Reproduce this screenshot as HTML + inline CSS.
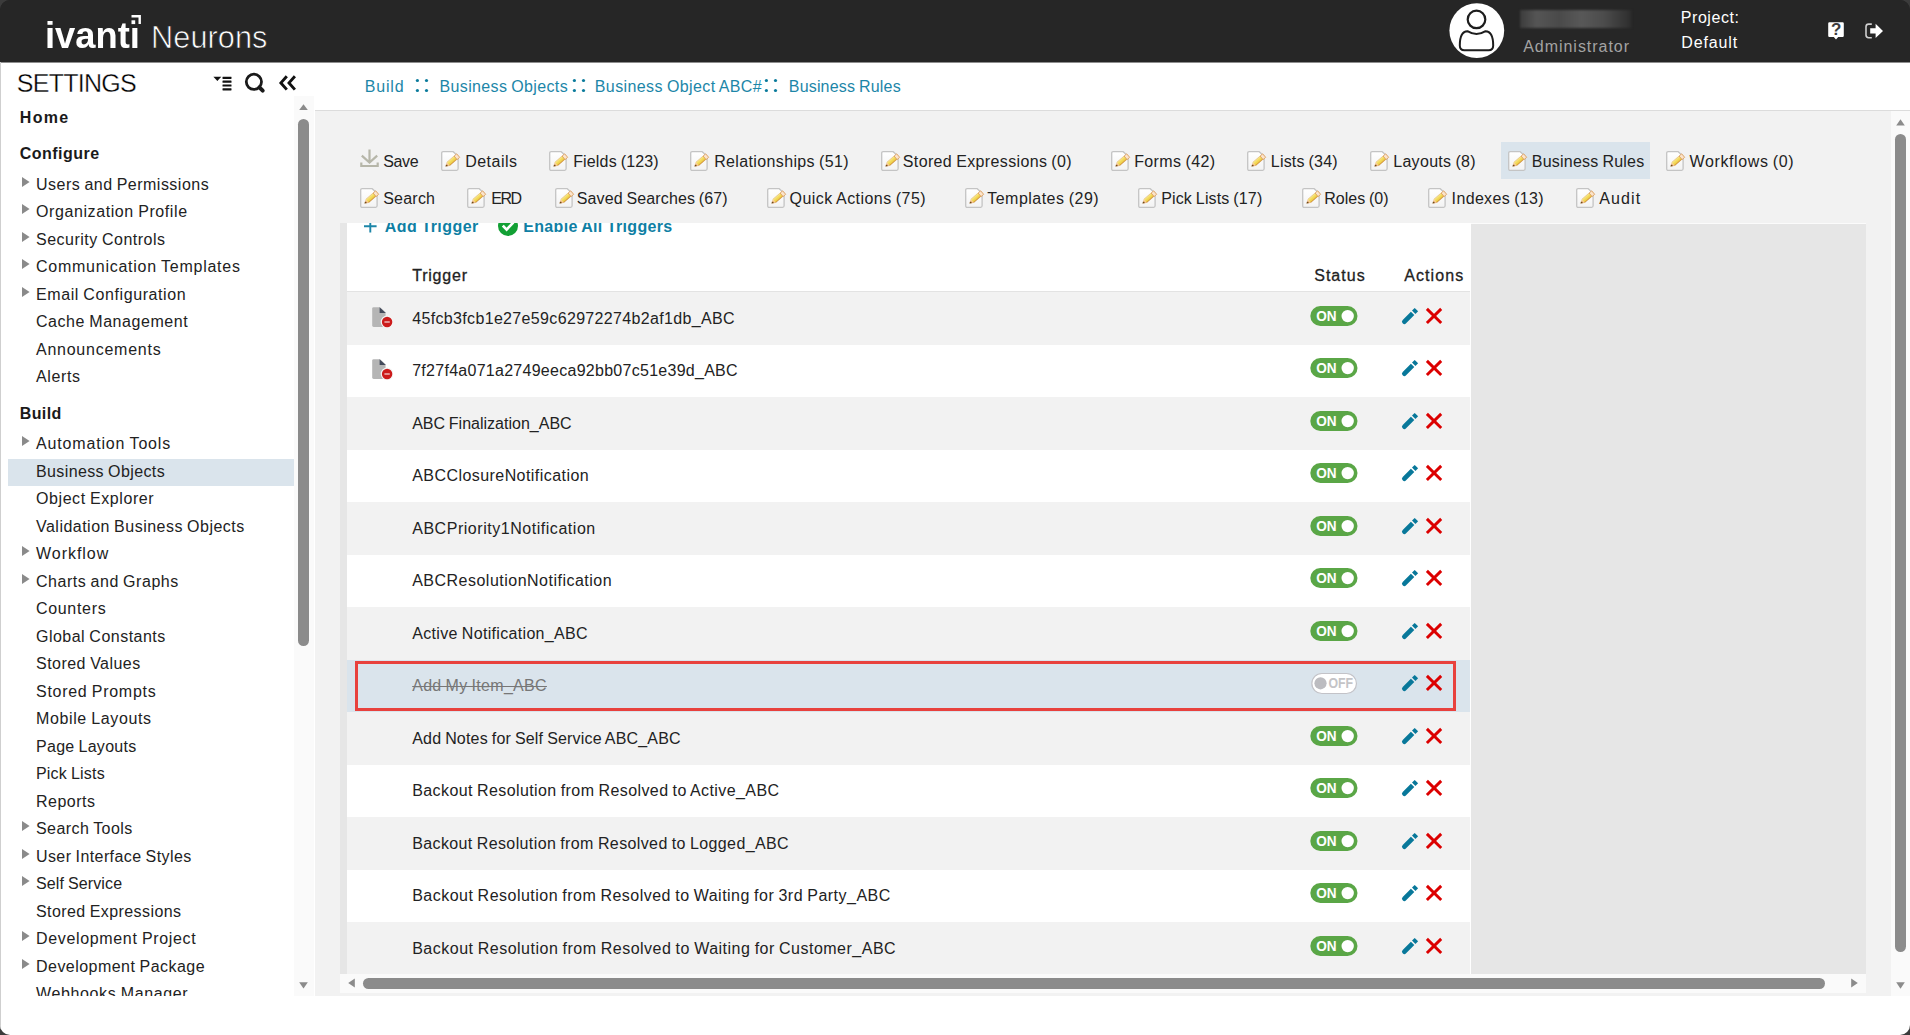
<!DOCTYPE html>
<html><head><meta charset="utf-8"><title>Ivanti Neurons - Business Rules</title>
<style>
*{box-sizing:border-box}
html,body{margin:0;padding:0}
body{width:1910px;height:1035px;overflow:hidden;background:#3b3b3b;font-family:"Liberation Sans",sans-serif;}
#app{position:absolute;left:0;top:0;width:1910px;height:1035px;background:linear-gradient(#262626 0,#262626 62px,#fff 62px);border-radius:10px;overflow:hidden}
.a{position:absolute;display:block}
.t{position:absolute;white-space:pre;display:block}
#hdr{left:0;top:0;width:1910px;height:62px;background:#262626;border-bottom:0}
#hline{left:0;top:62px;width:1910px;height:1px;background:#8e8e8e}
#ledge{left:0;top:62px;width:1px;height:973px;background:#cfcfcf}
#side{left:0;top:62px;width:294px;height:933.6px;overflow:hidden}
#strack{left:294px;top:96px;width:19.5px;height:899.6px;background:#fafafa}
#main{left:315px;top:110.4px;width:1576.3px;height:885.2px;background:#f2f2f2}
#bline{left:315px;top:110px;width:1595px;height:1px;background:#dcdcdc}
#vtrack{left:1891.3px;top:111px;width:18.7px;height:884.6px;background:#fafafa}
#act{left:1501px;top:142px;width:148.6px;height:36.6px;background:#dae4ec}
#panel{left:340px;top:223px;width:1526px;height:751px;background:#e6e6e6;overflow:hidden}
#pwhite{left:6.5px;top:0;width:1124.5px;height:751px;background:#fff}
#pline{left:1471px;top:223px;width:395px;height:1px;background:#fbfbfb}
#htrack{left:340px;top:974px;width:1526px;height:19px;background:#fafafa}
.th{background:#8b8b8b;border-radius:6px}
</style></head>
<body>

<svg width="0" height="0" style="position:absolute"><defs>
<linearGradient id="pgr" gradientUnits="userSpaceOnUse" x1="5.68" y1="11.44" x2="8.68" y2="14.92"><stop offset="0" stop-color="#f6e7a6"/><stop offset="0.3" stop-color="#f5e064"/><stop offset="0.7" stop-color="#efcf4c"/><stop offset="1" stop-color="#c98434"/></linearGradient>
<linearGradient id="pgp" x1="0" y1="0" x2="0" y2="1"><stop offset="0" stop-color="#fff"/><stop offset="1" stop-color="#f3f3f3"/></linearGradient>
<g id="pg">
 <path d="M2.2 0.7H12.2L17.1 5.2V17.8Q17.1 19.3 15.6 19.3H2.2Q0.7 19.3 0.7 17.8V2.2Q0.7 0.7 2.2 0.7Z" fill="url(#pgp)" stroke="#c4c4c4" stroke-width="1.3"/>
 <path d="M5.68 11.44L13.1 5.04L16.1 8.52L8.68 14.92Z" fill="url(#pgr)"/>
 <path d="M13.1 5.04L15.68 2.83L18.68 6.31L16.1 8.52Z" fill="#fbe4cb" stroke="#d9964f" stroke-width="0.8" stroke-linejoin="round"/>
 <path d="M4.6 15.4L5.68 11.44L8.68 14.92Z" fill="#f3bd88"/>
 <path d="M4.5 15.5L5 13.6L7.2 15.1Z" fill="#6b4716"/>
 <path d="M5.68 11.44L13.1 5.04" stroke="#e3b45c" stroke-width="0.6"/>
</g>
<g id="sep" fill="#0b7b9c"><circle cx="2.4" cy="2.5" r="1.6"/><circle cx="11.5" cy="2.5" r="1.6"/><circle cx="2.4" cy="12.5" r="1.6"/><circle cx="11.5" cy="12.5" r="1.6"/></g>
<g id="doc">
 <path d="M1.6 0.2H8L13.6 5.6V20H1.6Q0.2 20 0.2 18.6V1.6Q0.2 0.2 1.6 0.2Z" fill="#b5b5b5"/>
 <path d="M7.6 0.2L13.8 6H7.6Z" fill="#434a5a"/>
 <circle cx="15.1" cy="15" r="6.4" fill="#f4f4f4"/>
 <circle cx="15.1" cy="15" r="5.2" fill="#cc1b1b"/>
 <rect x="12.4" y="14.1" width="5.4" height="1.9" rx="0.5" fill="#e48f8f"/>
</g>
<g id="on">
 <rect x="0.3" y="0" width="47.2" height="20" rx="10" fill="#5aa646"/>
 <circle cx="37.7" cy="10.1" r="6.2" fill="#fff"/>
 <text x="6.2" y="15.2" font-family="Liberation Sans, sans-serif" font-weight="700" font-size="14.3" fill="#fff" textLength="20.4" lengthAdjust="spacingAndGlyphs">ON</text>
</g>
<g id="off">
 <rect x="1.85" y="-0.5" width="44.6" height="20" rx="10" fill="#fff" stroke="#c3c3c8" stroke-width="1.2"/>
 <circle cx="10.5" cy="9.3" r="6.1" fill="#bcbcc0"/>
 <text x="18.4" y="14.4" font-family="Liberation Sans, sans-serif" font-weight="700" font-size="13.8" fill="#c4c4c7" textLength="24.6" lengthAdjust="spacingAndGlyphs">OFF</text>
</g>
<g id="act">
 <path d="M1.7 11.9L9.9 3.7L13.3 7.1L5.1 15.3A2.4 2.4 0 0 1 1.7 11.9Z" fill="#08789a"/>
 <path d="M11 2.6L13.7 -0.1L17.1 3.3L14.4 6Z" fill="#08789a"/>
 <path d="M25.9 0.9L40.2 15M40.2 0.9L25.9 15" stroke="#dc0000" stroke-width="2.9" fill="none"/>
</g>
</defs></svg>

<div id="app">
<div class="a" id="hline"></div>
<div class="a" id="hdr"></div>

<svg class="a" style="left:131px;top:15px" width="11" height="11" viewBox="0 0 11 11"><path d="M0.5 0H9.9V9.1H7.5V2.4H0.5Z" fill="#fff"/><rect x="0.5" y="5.3" width="3.7" height="3.8" fill="#fff"/></svg>
<svg class="a" style="left:1449px;top:2.6px" width="56" height="56" viewBox="0 0 56 56"><circle cx="27.8" cy="27.6" r="27.4" fill="#fff"/><circle cx="27.5" cy="16.4" r="8.8" fill="none" stroke="#1d1d1d" stroke-width="2.2"/><path d="M18.4 28.2Q27.5 33.8 36.6 28.2Q44.2 28.6 44.2 42.4Q44.2 47.2 39.6 47.2H15.4Q10.8 47.2 10.8 42.4Q10.8 28.6 18.4 28.2Z" fill="none" stroke="#1d1d1d" stroke-width="2" stroke-linejoin="round"/></svg>
<div class="a" style="left:1520px;top:10px;width:112px;height:18px;background:linear-gradient(90deg,#3c3c3c,#555 15%,#4a4a4a 35%,#585858 55%,#4c4c4c 75%,#333 95%,#2a2a2a);filter:blur(1.2px)"></div>
<svg class="a" style="left:1828px;top:22px" width="17" height="18" viewBox="0 0 17 18"><path d="M1.4 0.3H14.6Q15.8 0.3 15.8 1.5V13.8Q15.8 15 14.6 15H10.2L8 17.4L5.8 15H1.4Q0.2 15 0.2 13.8V1.5Q0.2 0.3 1.4 0.3Z" fill="#fff"/><text x="8.1" y="13.4" text-anchor="middle" font-family="Liberation Sans, sans-serif" font-weight="700" font-size="17" fill="#3c3c3c">?</text></svg>
<svg class="a" style="left:1864.5px;top:23px" width="19" height="16" viewBox="0 0 19 16"><path d="M6.8 1.1H3.6Q1 1.1 1 3.7V12.1Q1 14.7 3.6 14.7H6.8" fill="none" stroke="#cfcfcf" stroke-width="1.6"/><path d="M5.2 5.2H10.6V0.8L18 7.9L10.6 15V10.6H5.2Z" fill="#fff"/></svg>

<div class="a" id="ledge"></div>
<div class="a" id="main"></div>
<div class="a" id="bline"></div>
<div class="a" id="act"></div>

<svg class="a" style="left:213px;top:76px" width="20" height="16" viewBox="0 0 20 16"><path d="M0.4 0.7H8.3L4.35 4.9Z" fill="#111"/><g fill="#111"><rect x="9.5" y="0.7" width="9" height="2.2" rx="0.4"/><rect x="9.5" y="4.6" width="9" height="2.2" rx="0.4"/><rect x="9.5" y="8.4" width="9" height="2.2" rx="0.4"/><rect x="9.5" y="12.3" width="9" height="2.2" rx="0.4"/></g></svg>
<svg class="a" style="left:244px;top:72px" width="23" height="23" viewBox="0 0 23 23"><circle cx="9.9" cy="9.8" r="7.6" fill="none" stroke="#1a1a1a" stroke-width="2.8"/><path d="M15.4 15.4L18.7 18.7" stroke="#1a1a1a" stroke-width="4" stroke-linecap="round"/></svg>
<svg class="a" style="left:278px;top:74px" width="20" height="18" viewBox="0 0 20 18"><path d="M8.8 2.2L2.9 8.9L8.8 15.6M16.9 2.2L11 8.9L16.9 15.6" fill="none" stroke="#111" stroke-width="2.9" stroke-linecap="butt" stroke-linejoin="miter"/></svg>

<svg class="a" style="left:360px;top:149px" width="19" height="19" viewBox="0 0 19 19"><path d="M9.5 0.6V13M1.8 6.6L9.5 13.6L17.2 6.6" fill="none" stroke="#b6b6a9" stroke-width="2.2"/><path d="M1.3 13.4V17H17.7V13.4" fill="none" stroke="#b6b6a9" stroke-width="2.2"/></svg>
<div class="a" id="side">
<div class="a" style="left:8px;top:397px;width:286px;height:27px;background:#dae4ec"></div>
<span class="t" style="left:36.0px;top:112.0px;font-size:16px;line-height:21px;letter-spacing:0.479px;color:#222;word-spacing:-0.72px;">Users and Permissions</span>
<span class="t" style="left:36.0px;top:139.0px;font-size:16px;line-height:21px;letter-spacing:0.592px;color:#222;word-spacing:-0.72px;">Organization Profile</span>
<span class="t" style="left:36.0px;top:167.0px;font-size:16px;line-height:21px;letter-spacing:0.496px;color:#222;word-spacing:-0.72px;">Security Controls</span>
<span class="t" style="left:36.0px;top:194.0px;font-size:16px;line-height:21px;letter-spacing:0.747px;color:#222;word-spacing:-0.72px;">Communication Templates</span>
<span class="t" style="left:36.0px;top:222.0px;font-size:16px;line-height:21px;letter-spacing:0.596px;color:#222;word-spacing:-0.72px;">Email Configuration</span>
<span class="t" style="left:36.0px;top:249.0px;font-size:16px;line-height:21px;letter-spacing:0.551px;color:#222;word-spacing:-0.72px;">Cache Management</span>
<span class="t" style="left:36.0px;top:277.0px;font-size:16px;line-height:21px;letter-spacing:0.750px;color:#222;">Announcements</span>
<span class="t" style="left:36.0px;top:304.0px;font-size:16px;line-height:21px;letter-spacing:0.627px;color:#222;">Alerts</span>
<span class="t" style="left:36.0px;top:371.0px;font-size:16px;line-height:21px;letter-spacing:0.834px;color:#222;word-spacing:-0.72px;">Automation Tools</span>
<span class="t" style="left:36.0px;top:399.0px;font-size:16px;line-height:21px;letter-spacing:0.383px;color:#222;word-spacing:-0.72px;">Business Objects</span>
<span class="t" style="left:36.0px;top:426.0px;font-size:16px;line-height:21px;letter-spacing:0.578px;color:#222;word-spacing:-0.72px;">Object Explorer</span>
<span class="t" style="left:36.0px;top:454.0px;font-size:16px;line-height:21px;letter-spacing:0.482px;color:#222;word-spacing:-0.72px;">Validation Business Objects</span>
<span class="t" style="left:36.0px;top:481.0px;font-size:16px;line-height:21px;letter-spacing:0.963px;color:#222;">Workflow</span>
<span class="t" style="left:36.0px;top:509.0px;font-size:16px;line-height:21px;letter-spacing:0.531px;color:#222;word-spacing:-0.72px;">Charts and Graphs</span>
<span class="t" style="left:36.0px;top:536.0px;font-size:16px;line-height:21px;letter-spacing:0.674px;color:#222;">Counters</span>
<span class="t" style="left:36.0px;top:564.0px;font-size:16px;line-height:21px;letter-spacing:0.482px;color:#222;word-spacing:-0.72px;">Global Constants</span>
<span class="t" style="left:36.0px;top:591.0px;font-size:16px;line-height:21px;letter-spacing:0.469px;color:#222;word-spacing:-0.72px;">Stored Values</span>
<span class="t" style="left:36.0px;top:619.0px;font-size:16px;line-height:21px;letter-spacing:0.708px;color:#222;word-spacing:-0.72px;">Stored Prompts</span>
<span class="t" style="left:36.0px;top:646.0px;font-size:16px;line-height:21px;letter-spacing:0.626px;color:#222;word-spacing:-0.72px;">Mobile Layouts</span>
<span class="t" style="left:36.0px;top:674.0px;font-size:16px;line-height:21px;letter-spacing:0.282px;color:#222;word-spacing:-0.72px;">Page Layouts</span>
<span class="t" style="left:36.0px;top:701.0px;font-size:16px;line-height:21px;letter-spacing:0.198px;color:#222;word-spacing:-0.72px;">Pick Lists</span>
<span class="t" style="left:36.0px;top:729.0px;font-size:16px;line-height:21px;letter-spacing:0.501px;color:#222;">Reports</span>
<span class="t" style="left:36.0px;top:756.0px;font-size:16px;line-height:21px;letter-spacing:0.432px;color:#222;word-spacing:-0.72px;">Search Tools</span>
<span class="t" style="left:36.0px;top:784.0px;font-size:16px;line-height:21px;letter-spacing:0.409px;color:#222;word-spacing:-0.72px;">User Interface Styles</span>
<span class="t" style="left:36.0px;top:811.0px;font-size:16px;line-height:21px;letter-spacing:0.126px;color:#222;word-spacing:-0.72px;">Self Service</span>
<span class="t" style="left:36.0px;top:839.0px;font-size:16px;line-height:21px;letter-spacing:0.413px;color:#222;word-spacing:-0.72px;">Stored Expressions</span>
<span class="t" style="left:36.0px;top:866.0px;font-size:16px;line-height:21px;letter-spacing:0.658px;color:#222;word-spacing:-0.72px;">Development Project</span>
<span class="t" style="left:36.0px;top:894.0px;font-size:16px;line-height:21px;letter-spacing:0.465px;color:#222;word-spacing:-0.72px;">Development Package</span>
<span class="t" style="left:36.0px;top:921.0px;font-size:16px;line-height:21px;letter-spacing:0.630px;color:#222;word-spacing:-0.72px;">Webhooks Manager</span>
<svg class="a" style="left:22.4px;top:115.0px" width="8" height="10" viewBox="0 0 8 10"><path d="M0 0L7.6 5L0 10Z" fill="#8a8a8a"/></svg>
<svg class="a" style="left:22.4px;top:142.0px" width="8" height="10" viewBox="0 0 8 10"><path d="M0 0L7.6 5L0 10Z" fill="#8a8a8a"/></svg>
<svg class="a" style="left:22.4px;top:170.0px" width="8" height="10" viewBox="0 0 8 10"><path d="M0 0L7.6 5L0 10Z" fill="#8a8a8a"/></svg>
<svg class="a" style="left:22.4px;top:197.0px" width="8" height="10" viewBox="0 0 8 10"><path d="M0 0L7.6 5L0 10Z" fill="#8a8a8a"/></svg>
<svg class="a" style="left:22.4px;top:225.0px" width="8" height="10" viewBox="0 0 8 10"><path d="M0 0L7.6 5L0 10Z" fill="#8a8a8a"/></svg>
<svg class="a" style="left:22.4px;top:374.0px" width="8" height="10" viewBox="0 0 8 10"><path d="M0 0L7.6 5L0 10Z" fill="#8a8a8a"/></svg>
<svg class="a" style="left:22.4px;top:484.0px" width="8" height="10" viewBox="0 0 8 10"><path d="M0 0L7.6 5L0 10Z" fill="#8a8a8a"/></svg>
<svg class="a" style="left:22.4px;top:512.0px" width="8" height="10" viewBox="0 0 8 10"><path d="M0 0L7.6 5L0 10Z" fill="#8a8a8a"/></svg>
<svg class="a" style="left:22.4px;top:759.0px" width="8" height="10" viewBox="0 0 8 10"><path d="M0 0L7.6 5L0 10Z" fill="#8a8a8a"/></svg>
<svg class="a" style="left:22.4px;top:787.0px" width="8" height="10" viewBox="0 0 8 10"><path d="M0 0L7.6 5L0 10Z" fill="#8a8a8a"/></svg>
<svg class="a" style="left:22.4px;top:814.0px" width="8" height="10" viewBox="0 0 8 10"><path d="M0 0L7.6 5L0 10Z" fill="#8a8a8a"/></svg>
<svg class="a" style="left:22.4px;top:869.0px" width="8" height="10" viewBox="0 0 8 10"><path d="M0 0L7.6 5L0 10Z" fill="#8a8a8a"/></svg>
<svg class="a" style="left:22.4px;top:897.0px" width="8" height="10" viewBox="0 0 8 10"><path d="M0 0L7.6 5L0 10Z" fill="#8a8a8a"/></svg>
</div>
<div class="a" id="panel">
<div class="a" id="pwhite"></div>
<div class="a" style="left:7px;top:69px;width:1123px;height:53px;background:#f2f2f2"></div>
<div class="a" style="left:7px;top:122px;width:1123px;height:52px;background:#fff"></div>
<div class="a" style="left:7px;top:174px;width:1123px;height:53px;background:#f2f2f2"></div>
<div class="a" style="left:7px;top:227px;width:1123px;height:52px;background:#fff"></div>
<div class="a" style="left:7px;top:279px;width:1123px;height:53px;background:#f2f2f2"></div>
<div class="a" style="left:7px;top:332px;width:1123px;height:52px;background:#fff"></div>
<div class="a" style="left:7px;top:384px;width:1123px;height:53px;background:#f2f2f2"></div>
<div class="a" style="left:7px;top:437px;width:1123px;height:52px;background:#dae4ec"></div>
<div class="a" style="left:7px;top:489px;width:1123px;height:53px;background:#f2f2f2"></div>
<div class="a" style="left:7px;top:542px;width:1123px;height:52px;background:#fff"></div>
<div class="a" style="left:7px;top:594px;width:1123px;height:53px;background:#f2f2f2"></div>
<div class="a" style="left:7px;top:647px;width:1123px;height:52px;background:#fff"></div>
<div class="a" style="left:7px;top:699px;width:1123px;height:53px;background:#f2f2f2"></div>
<div class="a" style="left:7px;top:752px;width:1123px;height:52px;background:#fff"></div>
<div class="a" style="left:7px;top:68px;width:1123px;height:1px;background:#e3e3e3"></div>
<span class="t" style="left:44.8px;top:-7.0px;font-size:16px;line-height:21px;letter-spacing:0.438px;color:#0f7fa4;word-spacing:-0.72px;font-weight:700;">Add Trigger</span>
<span class="t" style="left:183.2px;top:-7.0px;font-size:16px;line-height:21px;letter-spacing:0.341px;color:#0f7fa4;word-spacing:-0.72px;font-weight:700;">Enable All Triggers</span>
<span class="t" style="left:72.2px;top:42.0px;font-size:16px;line-height:21px;letter-spacing:0.791px;color:#222;-webkit-text-stroke:0.3px #222;">Trigger</span>
<span class="t" style="left:974.2px;top:42.0px;font-size:16px;line-height:21px;letter-spacing:1.016px;color:#222;-webkit-text-stroke:0.3px #222;">Status</span>
<span class="t" style="left:1064.2px;top:42.0px;font-size:16px;line-height:21px;letter-spacing:1.079px;color:#222;-webkit-text-stroke:0.3px #222;">Actions</span>
<span class="t" style="left:72.2px;top:85.0px;font-size:16px;line-height:21px;letter-spacing:0.341px;color:#222;">45fcb3fcb1e27e59c62972274b2af1db_ABC</span>
<span class="t" style="left:72.2px;top:137.0px;font-size:16px;line-height:21px;letter-spacing:0.274px;color:#222;">7f27f4a071a2749eeca92bb07c51e39d_ABC</span>
<span class="t" style="left:72.2px;top:190.0px;font-size:16px;line-height:21px;letter-spacing:0.004px;color:#222;word-spacing:-0.72px;">ABC Finalization_ABC</span>
<span class="t" style="left:72.2px;top:242.0px;font-size:16px;line-height:21px;letter-spacing:0.441px;color:#222;">ABCClosureNotification</span>
<span class="t" style="left:72.2px;top:295.0px;font-size:16px;line-height:21px;letter-spacing:0.535px;color:#222;">ABCPriority1Notification</span>
<span class="t" style="left:72.2px;top:347.0px;font-size:16px;line-height:21px;letter-spacing:0.491px;color:#222;">ABCResolutionNotification</span>
<span class="t" style="left:72.2px;top:400.0px;font-size:16px;line-height:21px;letter-spacing:0.327px;color:#222;word-spacing:-0.72px;">Active Notification_ABC</span>
<span class="t" style="left:72.2px;top:452.0px;font-size:16px;line-height:21px;letter-spacing:0.305px;color:#777;word-spacing:-0.72px;text-decoration:line-through;">Add My Item_ABC</span>
<span class="t" style="left:72.2px;top:505.0px;font-size:16px;line-height:21px;letter-spacing:0.186px;color:#222;word-spacing:-0.72px;">Add Notes for Self Service ABC_ABC</span>
<span class="t" style="left:72.2px;top:557.0px;font-size:16px;line-height:21px;letter-spacing:0.406px;color:#222;word-spacing:-0.72px;">Backout Resolution from Resolved to Active_ABC</span>
<span class="t" style="left:72.2px;top:610.0px;font-size:16px;line-height:21px;letter-spacing:0.381px;color:#222;word-spacing:-0.72px;">Backout Resolution from Resolved to Logged_ABC</span>
<span class="t" style="left:72.2px;top:662.0px;font-size:16px;line-height:21px;letter-spacing:0.485px;color:#222;word-spacing:-0.72px;">Backout Resolution from Resolved to Waiting for 3rd Party_ABC</span>
<span class="t" style="left:72.2px;top:715.0px;font-size:16px;line-height:21px;letter-spacing:0.497px;color:#222;word-spacing:-0.72px;">Backout Resolution from Resolved to Waiting for Customer_ABC</span>
<svg class="a" style="left:24px;top:-3.4px" width="13" height="13" viewBox="0 0 13 13"><path d="M6.3 0V12.6M0 6.3H12.6" stroke="#1d86a8" stroke-width="1.9" fill="none"/></svg>
<svg class="a" style="left:158px;top:-7px" width="20" height="20" viewBox="0 0 20 20"><circle cx="10" cy="10" r="10" fill="#12a034"/><path d="M4.8 9.6L8.6 13.6L15.4 6.4" stroke="#fff" stroke-width="2.7" fill="none"/></svg>
<svg class="a" style="left:32px;top:84.0px" width="21" height="21" viewBox="0 0 21 21"><use href="#doc"/></svg>
<svg class="a" style="left:969.5px;top:83.0px" width="48" height="21" viewBox="0 0 48 21" overflow="visible"><use href="#on"/></svg>
<svg class="a" style="left:1061px;top:85.0px" width="42" height="17" viewBox="0 0 42 17" overflow="visible"><use href="#act"/></svg>
<svg class="a" style="left:32px;top:136.0px" width="21" height="21" viewBox="0 0 21 21"><use href="#doc"/></svg>
<svg class="a" style="left:969.5px;top:135.0px" width="48" height="21" viewBox="0 0 48 21" overflow="visible"><use href="#on"/></svg>
<svg class="a" style="left:1061px;top:137.0px" width="42" height="17" viewBox="0 0 42 17" overflow="visible"><use href="#act"/></svg>
<svg class="a" style="left:969.5px;top:188.0px" width="48" height="21" viewBox="0 0 48 21" overflow="visible"><use href="#on"/></svg>
<svg class="a" style="left:1061px;top:190.0px" width="42" height="17" viewBox="0 0 42 17" overflow="visible"><use href="#act"/></svg>
<svg class="a" style="left:969.5px;top:240.0px" width="48" height="21" viewBox="0 0 48 21" overflow="visible"><use href="#on"/></svg>
<svg class="a" style="left:1061px;top:242.0px" width="42" height="17" viewBox="0 0 42 17" overflow="visible"><use href="#act"/></svg>
<svg class="a" style="left:969.5px;top:293.0px" width="48" height="21" viewBox="0 0 48 21" overflow="visible"><use href="#on"/></svg>
<svg class="a" style="left:1061px;top:295.0px" width="42" height="17" viewBox="0 0 42 17" overflow="visible"><use href="#act"/></svg>
<svg class="a" style="left:969.5px;top:345.0px" width="48" height="21" viewBox="0 0 48 21" overflow="visible"><use href="#on"/></svg>
<svg class="a" style="left:1061px;top:347.0px" width="42" height="17" viewBox="0 0 42 17" overflow="visible"><use href="#act"/></svg>
<svg class="a" style="left:969.5px;top:398.0px" width="48" height="21" viewBox="0 0 48 21" overflow="visible"><use href="#on"/></svg>
<svg class="a" style="left:1061px;top:400.0px" width="42" height="17" viewBox="0 0 42 17" overflow="visible"><use href="#act"/></svg>
<svg class="a" style="left:969.5px;top:451.0px" width="48" height="21" viewBox="0 0 48 21" overflow="visible"><use href="#off"/></svg>
<svg class="a" style="left:1061px;top:452.0px" width="42" height="17" viewBox="0 0 42 17" overflow="visible"><use href="#act"/></svg>
<svg class="a" style="left:969.5px;top:503.0px" width="48" height="21" viewBox="0 0 48 21" overflow="visible"><use href="#on"/></svg>
<svg class="a" style="left:1061px;top:505.0px" width="42" height="17" viewBox="0 0 42 17" overflow="visible"><use href="#act"/></svg>
<svg class="a" style="left:969.5px;top:555.0px" width="48" height="21" viewBox="0 0 48 21" overflow="visible"><use href="#on"/></svg>
<svg class="a" style="left:1061px;top:557.0px" width="42" height="17" viewBox="0 0 42 17" overflow="visible"><use href="#act"/></svg>
<svg class="a" style="left:969.5px;top:608.0px" width="48" height="21" viewBox="0 0 48 21" overflow="visible"><use href="#on"/></svg>
<svg class="a" style="left:1061px;top:610.0px" width="42" height="17" viewBox="0 0 42 17" overflow="visible"><use href="#act"/></svg>
<svg class="a" style="left:969.5px;top:660.0px" width="48" height="21" viewBox="0 0 48 21" overflow="visible"><use href="#on"/></svg>
<svg class="a" style="left:1061px;top:662.0px" width="42" height="17" viewBox="0 0 42 17" overflow="visible"><use href="#act"/></svg>
<svg class="a" style="left:969.5px;top:713.0px" width="48" height="21" viewBox="0 0 48 21" overflow="visible"><use href="#on"/></svg>
<svg class="a" style="left:1061px;top:715.0px" width="42" height="17" viewBox="0 0 42 17" overflow="visible"><use href="#act"/></svg>
<div class="a" style="left:15px;top:438px;width:1101px;height:50px;border:3px solid #e8413d"></div>
</div>
<div class="a" id="pline"></div>

<div class="a" id="strack"></div>
<svg class="a" style="left:299px;top:104px" width="9" height="6" viewBox="0 0 9 6"><path d="M4.5 0.2L8.8 6H0.2Z" fill="#8b8b8b"/></svg>
<div class="a th" style="left:298px;top:119px;width:11px;height:526.6px"></div>
<svg class="a" style="left:299px;top:981.5px" width="9" height="7" viewBox="0 0 9 7"><path d="M0.2 0.3H8.8L4.5 6.6Z" fill="#8b8b8b"/></svg>
<div class="a" id="vtrack"></div>
<svg class="a" style="left:1896px;top:119px" width="9" height="7" viewBox="0 0 9 7"><path d="M4.5 0.2L8.8 6.6H0.2Z" fill="#8b8b8b"/></svg>
<div class="a th" style="left:1895px;top:134px;width:11px;height:818px"></div>
<svg class="a" style="left:1896px;top:982px" width="9" height="7" viewBox="0 0 9 7"><path d="M0.2 0.3H8.8L4.5 6.8Z" fill="#8b8b8b"/></svg>
<div class="a" id="htrack"></div>
<svg class="a" style="left:348px;top:978px" width="7" height="10" viewBox="0 0 7 10"><path d="M0.2 5L6.8 0.4V9.6Z" fill="#8b8b8b"/></svg>
<div class="a th" style="left:363px;top:978px;width:1462px;height:11px"></div>
<svg class="a" style="left:1851px;top:978px" width="7" height="10" viewBox="0 0 7 10"><path d="M6.8 5L0.2 0.4V9.6Z" fill="#8b8b8b"/></svg>

<span class="t" style="left:45.1px;top:12.6px;font-size:36.6px;line-height:45px;color:#fff;transform:scaleX(0.9931);transform-origin:0 0;font-weight:700;">ivantı</span>
<span class="t" style="left:151.0px;top:17.6px;font-size:30.7px;line-height:39px;letter-spacing:0.077px;color:#fff;-webkit-text-stroke:0.7px #262626;">Neurons</span>
<span class="t" style="left:1523.2px;top:36.0px;font-size:16px;line-height:21px;letter-spacing:0.966px;color:#a3a3a3;">Administrator</span>
<span class="t" style="left:1680.8px;top:7.0px;font-size:16px;line-height:21px;letter-spacing:0.556px;color:#fff;">Project:</span>
<span class="t" style="left:1681.2px;top:32.0px;font-size:16px;line-height:21px;letter-spacing:0.889px;color:#fff;">Default</span>
<span class="t" style="left:16.8px;top:67.0px;font-size:25px;line-height:32px;letter-spacing:-0.738px;color:#000;-webkit-text-stroke:0.35px #fff;">SETTINGS</span>
<span class="t" style="left:19.8px;top:107.0px;font-size:16px;line-height:21px;letter-spacing:1.329px;color:#1a1a1a;font-weight:700;">Home</span>
<span class="t" style="left:19.8px;top:143.0px;font-size:16px;line-height:21px;letter-spacing:0.462px;color:#1a1a1a;font-weight:700;">Configure</span>
<span class="t" style="left:19.8px;top:403.0px;font-size:16px;line-height:21px;letter-spacing:0.360px;color:#1a1a1a;font-weight:700;">Build</span>
<span class="t" style="left:364.8px;top:76.0px;font-size:16px;line-height:21px;letter-spacing:0.815px;color:#1c86a8;">Build</span>
<span class="t" style="left:439.6px;top:76.0px;font-size:16px;line-height:21px;letter-spacing:0.343px;color:#1c86a8;word-spacing:-0.72px;">Business Objects</span>
<span class="t" style="left:594.8px;top:76.0px;font-size:16px;line-height:21px;letter-spacing:0.385px;color:#1c86a8;word-spacing:-0.72px;">Business Object ABC#</span>
<span class="t" style="left:788.8px;top:76.0px;font-size:16px;line-height:21px;letter-spacing:0.175px;color:#1c86a8;word-spacing:-0.72px;">Business Rules</span>
<span class="t" style="left:383.2px;top:151.0px;font-size:16px;line-height:21px;letter-spacing:-0.343px;color:#222;">Save</span>
<span class="t" style="left:465.2px;top:151.0px;font-size:16px;line-height:21px;letter-spacing:0.489px;color:#222;">Details</span>
<span class="t" style="left:573.2px;top:151.0px;font-size:16px;line-height:21px;letter-spacing:0.152px;color:#222;word-spacing:-0.72px;">Fields (123)</span>
<span class="t" style="left:714.2px;top:151.0px;font-size:16px;line-height:21px;letter-spacing:0.365px;color:#222;word-spacing:-0.72px;">Relationships (51)</span>
<span class="t" style="left:902.8px;top:151.0px;font-size:16px;line-height:21px;letter-spacing:0.359px;color:#222;word-spacing:-0.72px;">Stored Expressions (0)</span>
<span class="t" style="left:1134.2px;top:151.0px;font-size:16px;line-height:21px;letter-spacing:0.370px;color:#222;word-spacing:-0.72px;">Forms (42)</span>
<span class="t" style="left:1270.8px;top:151.0px;font-size:16px;line-height:21px;letter-spacing:0.196px;color:#222;word-spacing:-0.72px;">Lists (34)</span>
<span class="t" style="left:1393.2px;top:151.0px;font-size:16px;line-height:21px;letter-spacing:0.311px;color:#222;word-spacing:-0.72px;">Layouts (8)</span>
<span class="t" style="left:1531.8px;top:151.0px;font-size:16px;line-height:21px;letter-spacing:0.221px;color:#222;word-spacing:-0.72px;">Business Rules</span>
<span class="t" style="left:1689.6px;top:151.0px;font-size:16px;line-height:21px;letter-spacing:0.605px;color:#222;word-spacing:-0.72px;">Workflows (0)</span>
<span class="t" style="left:383.2px;top:188.0px;font-size:16px;line-height:21px;letter-spacing:0.227px;color:#222;">Search</span>
<span class="t" style="left:491.2px;top:188.0px;font-size:16px;line-height:21px;letter-spacing:-1.471px;color:#222;">ERD</span>
<span class="t" style="left:576.8px;top:188.0px;font-size:16px;line-height:21px;letter-spacing:0.109px;color:#222;word-spacing:-0.72px;">Saved Searches (67)</span>
<span class="t" style="left:789.6px;top:188.0px;font-size:16px;line-height:21px;letter-spacing:0.450px;color:#222;word-spacing:-0.72px;">Quick Actions (75)</span>
<span class="t" style="left:987.2px;top:188.0px;font-size:16px;line-height:21px;letter-spacing:0.487px;color:#222;word-spacing:-0.72px;">Templates (29)</span>
<span class="t" style="left:1161.2px;top:188.0px;font-size:16px;line-height:21px;letter-spacing:0.144px;color:#222;word-spacing:-0.72px;">Pick Lists (17)</span>
<span class="t" style="left:1324.2px;top:188.0px;font-size:16px;line-height:21px;letter-spacing:0.032px;color:#222;word-spacing:-0.72px;">Roles (0)</span>
<span class="t" style="left:1451.6px;top:188.0px;font-size:16px;line-height:21px;letter-spacing:0.347px;color:#222;word-spacing:-0.72px;">Indexes (13)</span>
<span class="t" style="left:1599.2px;top:188.0px;font-size:16px;line-height:21px;letter-spacing:1.143px;color:#222;">Audit</span>
<svg class="a" style="left:441.3px;top:151.2px" width="20" height="20" viewBox="0 0 20 20"><use href="#pg"/></svg>
<svg class="a" style="left:549.0px;top:151.2px" width="20" height="20" viewBox="0 0 20 20"><use href="#pg"/></svg>
<svg class="a" style="left:690.0px;top:151.2px" width="20" height="20" viewBox="0 0 20 20"><use href="#pg"/></svg>
<svg class="a" style="left:881.0px;top:151.2px" width="20" height="20" viewBox="0 0 20 20"><use href="#pg"/></svg>
<svg class="a" style="left:1111.0px;top:151.2px" width="20" height="20" viewBox="0 0 20 20"><use href="#pg"/></svg>
<svg class="a" style="left:1247.0px;top:151.2px" width="20" height="20" viewBox="0 0 20 20"><use href="#pg"/></svg>
<svg class="a" style="left:1370.0px;top:151.2px" width="20" height="20" viewBox="0 0 20 20"><use href="#pg"/></svg>
<svg class="a" style="left:1508.0px;top:151.2px" width="20" height="20" viewBox="0 0 20 20"><use href="#pg"/></svg>
<svg class="a" style="left:1666.0px;top:151.2px" width="20" height="20" viewBox="0 0 20 20"><use href="#pg"/></svg>
<svg class="a" style="left:360.3px;top:188.3px" width="20" height="20" viewBox="0 0 20 20"><use href="#pg"/></svg>
<svg class="a" style="left:467.0px;top:188.3px" width="20" height="20" viewBox="0 0 20 20"><use href="#pg"/></svg>
<svg class="a" style="left:555.0px;top:188.3px" width="20" height="20" viewBox="0 0 20 20"><use href="#pg"/></svg>
<svg class="a" style="left:767.0px;top:188.3px" width="20" height="20" viewBox="0 0 20 20"><use href="#pg"/></svg>
<svg class="a" style="left:965.0px;top:188.3px" width="20" height="20" viewBox="0 0 20 20"><use href="#pg"/></svg>
<svg class="a" style="left:1138.0px;top:188.3px" width="20" height="20" viewBox="0 0 20 20"><use href="#pg"/></svg>
<svg class="a" style="left:1302.0px;top:188.3px" width="20" height="20" viewBox="0 0 20 20"><use href="#pg"/></svg>
<svg class="a" style="left:1428.0px;top:188.3px" width="20" height="20" viewBox="0 0 20 20"><use href="#pg"/></svg>
<svg class="a" style="left:1576.0px;top:188.3px" width="20" height="20" viewBox="0 0 20 20"><use href="#pg"/></svg>
<svg class="a" style="left:415.0px;top:78px" width="14" height="15" viewBox="0 0 14 15"><use href="#sep"/></svg>
<svg class="a" style="left:571.6px;top:78px" width="14" height="15" viewBox="0 0 14 15"><use href="#sep"/></svg>
<svg class="a" style="left:764.4px;top:78px" width="14" height="15" viewBox="0 0 14 15"><use href="#sep"/></svg>
</div>
</body></html>
